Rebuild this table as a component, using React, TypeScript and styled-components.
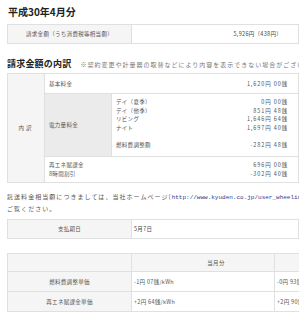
import React from "react";
import styled, { createGlobalStyle } from "styled-components";

const GlobalStyle = createGlobalStyle`
  html, body {
    margin: 0;
    padding: 0;
    background: #fff;
  }
  body {
    width: 299px;
    height: 320px;
    overflow: hidden;
    font-family: "Noto Sans CJK JP", "Noto Sans", sans-serif;
    color: #555;
  }
`;

const Page = styled.div`
  padding: 6px 0 0 7px;
  width: 292px;
`;

const MonthTitle = styled.h1`
  margin: 0 0 0 1px;
  font-size: 10px;
  line-height: 12px;
  font-weight: bold;
  color: #222;
`;

const SummaryTable = styled.div<{ $top: number }>`
  display: grid;
  grid-template-columns: 124px 1fr;
  height: 18px;
  margin-top: ${(p) => p.$top}px;
  border: 1px solid #e0e0e0;
  font-size: 5.5px;
  letter-spacing: 0.3px;
`;

const LabelCell = styled.div`
  display: flex;
  align-items: center;
  justify-content: center;
  background: #f5f5f5;
  border-right: 1px solid #e0e0e0;
`;

const ValueCell = styled.div<{ $align: "left" | "right" }>`
  display: flex;
  align-items: center;
  justify-content: ${(p) => (p.$align === "right" ? "flex-end" : "flex-start")};
  padding: ${(p) => (p.$align === "right" ? "0 16px 0 0" : "0 0 0 2px")};
  color: #444;
`;

const SectionHead = styled.div`
  display: flex;
  align-items: baseline;
  margin-top: 14px;
  white-space: nowrap;
`;

const SectionTitle = styled.h2`
  margin: 0;
  font-size: 9px;
  line-height: 12px;
  font-weight: bold;
  letter-spacing: 0.2px;
  color: #222;
`;

const Note = styled.span`
  margin-left: 9px;
  font-size: 6px;
  letter-spacing: 1px;
  color: #777;
`;

const Breakdown = styled.div`
  display: grid;
  grid-template-columns: 37px 67px 1fr;
  grid-template-rows: 20px 63px 25px;
  margin-top: 3px;
  border: 1px solid #e0e0e0;
  font-size: 5.5px;
  letter-spacing: 0.3px;
  color: #555;
`;

const SideHead = styled.div`
  grid-row: 1 / 4;
  display: flex;
  align-items: center;
  justify-content: center;
  background: #f5f5f5;
  border-right: 1px solid #e0e0e0;
  letter-spacing: 2px;
`;

const ItemRow = styled.div<{ $last?: boolean }>`
  grid-column: 2 / 4;
  display: flex;
  align-items: center;
  justify-content: space-between;
  padding: 0 10px 0 4px;
  border-bottom: ${(p) => (p.$last ? "none" : "1px solid #e0e0e0")};
`;

const EnergyHead = styled.div`
  display: flex;
  align-items: center;
  padding-left: 4px;
  background: #ebebeb;
  border-right: 1px solid #e0e0e0;
  border-bottom: 1px solid #e0e0e0;
`;

const EnergyDetail = styled.div`
  display: flex;
  justify-content: space-between;
  padding: 4px 10px 0 4px;
  border-bottom: 1px solid #e0e0e0;
`;

const Lines = styled.div<{ $right?: boolean }>`
  display: flex;
  flex-direction: column;
  align-items: ${(p) => (p.$right ? "flex-end" : "flex-start")};
  line-height: 8.5px;
`;

const Amount = styled.span`
  letter-spacing: 0.9px;
  color: #555;
`;

const Paragraph = styled.p`
  margin: 8px 0 0;
  font-size: 6px;
  line-height: 11px;
  letter-spacing: 1.05px;
  white-space: nowrap;
  color: #555;
`;

const Link = styled.span`
  font-family: "Liberation Mono", "DejaVu Sans Mono", monospace;
  letter-spacing: 0;
  color: #2b3890;
`;

const RateTable = styled.div`
  display: grid;
  grid-template-columns: 124px 143px 143px;
  grid-template-rows: 18px 20px 19px;
  width: 410px;
  margin-top: 14px;
  border: 1px solid #e0e0e0;
  font-size: 5.5px;
  letter-spacing: 0.3px;
`;

const RateCell = styled.div<{
  $head?: boolean;
  $center?: boolean;
  $last?: boolean;
  $shift?: number;
}>`
  display: flex;
  align-items: center;
  justify-content: ${(p) => (p.$center ? "center" : "flex-start")};
  padding-left: ${(p) => (p.$shift ?? (p.$center ? 0 : 2))}px;
  background: ${(p) => (p.$head ? "#f5f5f5" : "#fff")};
  border-right: 1px solid #e0e0e0;
  border-bottom: ${(p) => (p.$last ? "none" : "1px solid #e0e0e0")};
  color: #555;
`;

const energyRows = [
  ["デイ（夏季）", "0円 00銭"],
  ["デイ（他季）", "851円 48銭"],
  ["リビング", "1,646円 64銭"],
  ["ナイト", "1,697円 40銭"],
  ["", ""],
  ["燃料費調整額", "-282円 48銭"],
];

const rates = [
  ["燃料費調整単価", "-1円 07銭/kWh", "-0円 93銭/kWh"],
  ["再エネ賦課金単価", "+2円 64銭/kWh", "+2円 90銭/kWh"],
];

export default function App() {
  return (
    <>
      <GlobalStyle />
      <Page>
        <MonthTitle>平成30年4月分</MonthTitle>

        <SummaryTable $top={6}>
          <LabelCell>請求金額（うち消費税等相当額）</LabelCell>
          <ValueCell $align="right">5,926円（438円）</ValueCell>
        </SummaryTable>

        <SectionHead>
          <SectionTitle>請求金額の内訳</SectionTitle>
          <Note>※契約変更や計量器の取替などにより内容を表示できない場合がございます。</Note>
        </SectionHead>

        <Breakdown>
          <SideHead>内訳</SideHead>
          <ItemRow>
            <span>基本料金</span>
            <Amount>1,620円 00銭</Amount>
          </ItemRow>
          <EnergyHead>電力量料金</EnergyHead>
          <EnergyDetail>
            <Lines>
              {energyRows.map(([label], i) => (
                <span key={i}>{label || "\u00a0"}</span>
              ))}
            </Lines>
            <Lines $right>
              {energyRows.map(([, value], i) => (
                <Amount key={i}>{value || "\u00a0"}</Amount>
              ))}
            </Lines>
          </EnergyDetail>
          <ItemRow $last>
            <Lines>
              <span>再エネ賦課金</span>
              <span>8時間割引</span>
            </Lines>
            <Lines $right>
              <Amount>696円 00銭</Amount>
              <Amount>-302円 40銭</Amount>
            </Lines>
          </ItemRow>
        </Breakdown>

        <Paragraph>
          託送料金相当額につきましては、当社ホームページ(
          <Link>http://www.kyuden.co.jp/user_wheeling/</Link>)で
          <br />
          ご覧ください。
        </Paragraph>

        <SummaryTable $top={5}>
          <LabelCell>支払期日</LabelCell>
          <ValueCell $align="left">5月7日</ValueCell>
        </SummaryTable>

        <RateTable>
          <RateCell $head />
          <RateCell $head $center $shift={26}>当月分</RateCell>
          <RateCell $head $center>翌月分</RateCell>
          {rates.map(([label, now, next], i) => (
            <React.Fragment key={label}>
              <RateCell $head $center $last={i === rates.length - 1}>
                {label}
              </RateCell>
              <RateCell $last={i === rates.length - 1}>{now}</RateCell>
              <RateCell $last={i === rates.length - 1}>{next}</RateCell>
            </React.Fragment>
          ))}
        </RateTable>
      </Page>
    </>
  );
}
